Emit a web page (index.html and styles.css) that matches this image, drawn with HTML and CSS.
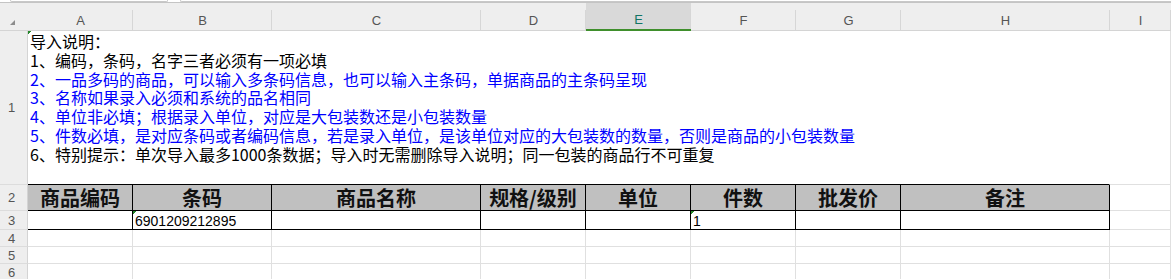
FILE: index.html
```html
<!DOCTYPE html>
<html lang="zh-CN">
<head>
<meta charset="utf-8">
<title>导入模板</title>
<link rel="stylesheet" href="styles.css">
</head>
<body>
<div class="toolbar">
  <div class="namebox"></div>
  <div class="fxbox"></div>
</div>
<div class="sheet">
  <div class="corner"><svg width="28" height="27" viewBox="0 0 28 27"><polygon points="15,17 15,22 10,22" fill="#8c8c8c"/></svg></div>
  <div class="colhead">A</div>
  <div class="colhead">B</div>
  <div class="colhead">C</div>
  <div class="colhead">D</div>
  <div class="colhead sel">E</div>
  <div class="colhead">F</div>
  <div class="colhead">G</div>
  <div class="colhead">H</div>
  <div class="colhead">I</div>

  <div class="rh">1</div>
  <div class="note mark">
    <div class="line">导入说明：</div>
    <div class="line">1、编码，条码，名字三者必须有一项必填</div>
    <div class="line blue">2、一品多码的商品，可以输入多条码信息，也可以输入主条码，单据商品的主条码呈现</div>
    <div class="line blue">3、名称如果录入必须和系统的品名相同</div>
    <div class="line blue">4、单位非必填；根据录入单位，对应是大包装数还是小包装数量</div>
    <div class="line blue">5、件数必填，是对应条码或者编码信息，若是录入单位，是该单位对应的大包装数的数量，否则是商品的小包装数量</div>
    <div class="line">6、特别提示：单次导入最多1000条数据；导入时无需删除导入说明；同一包装的商品行不可重复</div>
  </div>
  <div class="c"></div>

  <div class="rh">2</div>
  <div class="th">商品编码</div>
  <div class="th">条码</div>
  <div class="th">商品名称</div>
  <div class="th">规格/级别</div>
  <div class="th">单位</div>
  <div class="th">件数</div>
  <div class="th">批发价</div>
  <div class="th">备注</div>
  <div class="c"></div>

  <div class="rh">3</div>
  <div class="td"></div>
  <div class="td mark">6901209212895</div>
  <div class="td"></div>
  <div class="td"></div>
  <div class="td"></div>
  <div class="td mark">1</div>
  <div class="td"></div>
  <div class="td"></div>
  <div class="c"></div>

  <div class="rh">4</div>
  <div class="c"></div><div class="c"></div><div class="c"></div><div class="c"></div><div class="c"></div><div class="c"></div><div class="c"></div><div class="c"></div><div class="c"></div>

  <div class="rh">5</div>
  <div class="c"></div><div class="c"></div><div class="c"></div><div class="c"></div><div class="c"></div><div class="c"></div><div class="c"></div><div class="c"></div><div class="c"></div>

  <div class="rh">6</div>
  <div class="c"></div><div class="c"></div><div class="c"></div><div class="c"></div><div class="c"></div><div class="c"></div><div class="c"></div><div class="c"></div><div class="c"></div>
</div>
</body>
</html>
```
FILE: styles.css
```css
* { box-sizing: border-box; }
html, body {
  margin: 0;
  padding: 0;
  height: 279px;
  overflow: hidden;
  background: #fff;
}

.toolbar {
  height: 3px;
  border-bottom: 1px solid #c4c4c4;
  display: flex;
  gap: 12px;
  padding-left: 10px;
}
.namebox {
  width: 158px;
  height: 2px;
  border: 1px solid #c8c8c8;
  border-top: none;
  border-radius: 0 0 4px 4px;
}
.fxbox {
  flex: 1;
  height: 2px;
  border: 1px solid #c8c8c8;
  border-top: none;
  border-right: none;
  border-radius: 0 0 0 4px;
}

.sheet {
  display: grid;
  grid-template-columns: 28px 105px 139px 209px 105px 105px 105px 105px 209px 1fr;
  grid-template-rows: 28px 154px 26px 19px 17px 17px 17px;
  font-family: "Noto Sans CJK SC", sans-serif;
}

.corner {
  background: #eeeeee;
  border-bottom: 1px solid #d4d4d4;
}
.corner svg { display: block; }

.colhead {
  background: #eeeeee linear-gradient(#d6d6d6, #d6d6d6) no-repeat right 0 bottom 0 / 1px 20px;
  border-bottom: 1px solid #d4d4d4;
  display: flex;
  align-items: center;
  justify-content: center;
  padding-top: 7px;
  font: 13px "Liberation Sans", Arial, sans-serif;
  color: #555;
}
.colhead.sel {
  background-color: #d9d9d9;
  border-bottom: 2px solid #3f8f2c;
  padding-top: 6px;
  color: #117565;
}

.rh {
  background: #eeeeee;
  border-right: 1px solid #d4d4d4;
  border-bottom: 1px solid #dcdcdc;
  display: flex;
  align-items: center;
  justify-content: center;
  padding-right: 4px;
  font: 13px "Liberation Sans", Arial, sans-serif;
  color: #555;
}

.c {
  border-right: 1px solid #e0e0e0;
  border-bottom: 1px solid #e0e0e0;
}

.mark {
  background-image: linear-gradient(135deg, #25862a 50%, transparent 50%);
  background-size: 4px 4px;
  background-repeat: no-repeat;
}

.note {
  grid-column: span 8;
  border-bottom: 1px solid #000;
  border-right: 1px solid #fff;
  padding: 1px 0 0 2px;
  font-size: 16px;
  line-height: 18.8px;
  color: #000;
  white-space: nowrap;
}
.note .blue { color: #0000ff; }

.th {
  background: #c0c0c0;
  border-right: 1px solid #000;
  border-bottom: 1px solid #000;
  display: flex;
  align-items: center;
  justify-content: center;
  font-size: 20px;
  font-weight: 700;
  line-height: 24px;
  color: #111;
}

.td {
  border-right: 1px solid #000;
  border-bottom: 1px solid #000;
  display: flex;
  align-items: flex-end;
  padding-left: 2px;
  font: 14px/16px "Liberation Sans", Arial, sans-serif;
  color: #000;
}
```
